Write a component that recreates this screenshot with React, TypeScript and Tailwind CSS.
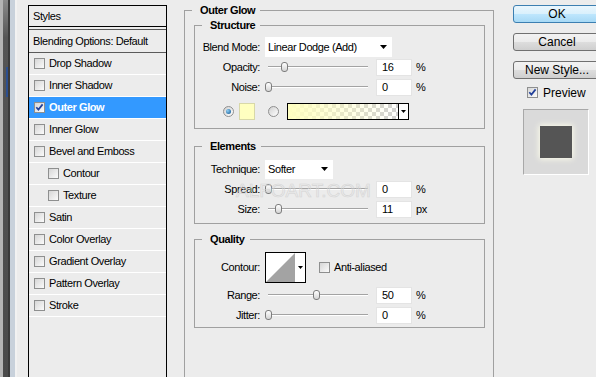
import React from "react";

const Arrow = () => (
  <svg width="7" height="4" viewBox="0 0 7 4" className="shrink-0">
    <path d="M0 0H7L3.5 4Z" fill="#000" />
  </svg>
);

function Check({ checked }: { checked?: boolean }) {
  return (
    <span className="w-[11px] h-[11px] shrink-0 border border-[#8e8f8f] bg-[linear-gradient(135deg,#d6d6d6,#fbfbfb)] flex items-center justify-center">
      {checked && (
        <svg width="9" height="9" viewBox="0 0 9 9">
          <path d="M1.3 4.3L3.4 6.6L7.6 1.4" stroke="#21409a" strokeWidth="1.7" fill="none" />
        </svg>
      )}
    </span>
  );
}

function Radio({ on }: { on?: boolean }) {
  return (
    <span className="w-[11px] h-[11px] rounded-full border border-[#8f8f8f] bg-[linear-gradient(135deg,#d0d0d0,#ffffff)] flex items-center justify-center shrink-0">
      {on && <span className="w-[5px] h-[5px] rounded-full bg-[radial-gradient(circle_at_35%_35%,#8fd0f5,#0a4f8c)]" />}
    </span>
  );
}

function StyleRow({ label, checked, active, indent }: { label: string; checked?: boolean; active?: boolean; indent?: boolean }) {
  return (
    <div
      className={`h-[22px] flex items-center gap-[4px] border-b border-white ${indent ? "pl-[19px]" : "pl-[5px]"} ${
        active ? "bg-[#3399ff] text-white font-bold" : ""
      }`}
    >
      <Check checked={checked} />
      <span>{label}</span>
    </div>
  );
}

function ValueBox({ value }: { value: string }) {
  return <div className="w-[36px] h-[17px] bg-white border border-[#e4e4e4] flex items-center pl-[5px]">{value}</div>;
}

function Slider({ pos }: { pos: number }) {
  return (
    <div className="relative w-[108px] h-[20px] shrink-0 flex items-center px-[4px]">
      <div className="w-full h-[2px] border-t border-[#a3a3a3] border-b border-b-white" />
      <div
        className="absolute top-[5px] w-[7px] h-[10px] rounded-[3px] border border-[#7d7d7d] bg-[linear-gradient(to_bottom,#ffffff,#d4d4d4)]"
        style={{ left: 4 + pos - 3 }}
      />
    </div>
  );
}

function SliderRow({ label, value, pos, unit }: { label: string; value: string; pos: number; unit: string }) {
  return (
    <div className="h-[20px] flex items-center">
      <span className="w-[65px] text-right shrink-0">{label}</span>
      <div className="ml-[4px]">
        <Slider pos={pos} />
      </div>
      <div className="ml-[4px]">
        <ValueBox value={value} />
      </div>
      <span className="ml-[4px]">{unit}</span>
    </div>
  );
}

function Group({ title, className, children }: { title: string; className?: string; children?: React.ReactNode }) {
  return (
    <fieldset className={`border border-[#a0a0a0] ${className ?? ""}`}>
      <legend className="ml-[7px] pl-[8px] pr-[5px] font-bold leading-[14px]">{title}</legend>
      {children}
    </fieldset>
  );
}

function Button({ label, primary }: { label: string; primary?: boolean }) {
  return (
    <div
      className={`h-[18px] w-[88px] rounded-[3px] border flex items-center justify-center text-[12px] tracking-normal ${
        primary
          ? "border-[#3c7fb1] bg-[linear-gradient(to_bottom,#eaf6fd_0%,#d9f0fc_50%,#bee6fd_51%,#a7d9f5_100%)]"
          : "border-[#707070] bg-[linear-gradient(to_bottom,#f2f2f2_0%,#ebebeb_50%,#dddddd_51%,#cfcfcf_100%)]"
      }`}
    >
      {label}
    </div>
  );
}

export default function App() {
  return (
    <div className="relative w-[596px] h-[377px] overflow-hidden bg-[#ececec] flex text-[11px] tracking-[-0.4px] text-black font-['Liberation_Sans',Arial,sans-serif]">
      {/* left edge of another window */}
      <div className="w-[17px] h-full flex shrink-0">
        <div className="w-[3px] h-full bg-[#b4b4b4]" />
        <div className="w-[5px] h-full bg-[linear-gradient(to_bottom,#8a8a8a_0%,#555555_10%,#4a4a4a_100%)] flex flex-col">
          <div className="h-[67px]" />
          <div className="ml-[3px] w-[2px] h-[30px] bg-[#2c4f8f]" />
        </div>
        <div className="w-[2px] h-full bg-[#3a3a3a]" />
        <div className="w-[5px] h-full bg-[#c8d1db]" />
        <div className="w-[2px] h-full bg-[#f2f2f2]" />
      </div>

      {/* styles list */}
      <div className="ml-[11px] mt-[5px] w-[139px] h-[400px] shrink-0 border border-black">
        <div className="h-[21px] border-b border-black flex items-center pl-[4px]">Styles</div>
        <div className="h-[3px] border-b border-[#555555]" />
        <div className="h-[23px] border-b border-[#5a5a5a] flex items-center pl-[4px]">Blending Options: Default</div>
        <StyleRow label="Drop Shadow" />
        <StyleRow label="Inner Shadow" />
        <StyleRow label="Outer Glow" checked active />
        <StyleRow label="Inner Glow" />
        <StyleRow label="Bevel and Emboss" />
        <StyleRow label="Contour" indent />
        <StyleRow label="Texture" indent />
        <StyleRow label="Satin" />
        <StyleRow label="Color Overlay" />
        <StyleRow label="Gradient Overlay" />
        <StyleRow label="Pattern Overlay" />
        <StyleRow label="Stroke" />
      </div>

      {/* main panel */}
      <Group title="Outer Glow" className="ml-[17px] mt-[3px] w-[310px] h-[420px] shrink-0">
        <Group title="Structure" className="ml-[9px] mr-[8px] mt-[1px] pb-[8px]">
          <div className="pt-[5px]">
            <div className="h-[20px] flex items-center">
              <span className="w-[65px] text-right shrink-0">Blend Mode:</span>
              <div className="ml-[5px] w-[127px] h-[20px] bg-white flex items-center justify-between pl-[3px] pr-[5px]">
                <span>Linear Dodge (Add)</span>
                <Arrow />
              </div>
            </div>
            <SliderRow label="Opacity:" value="16" pos={16} unit="%" />
            <SliderRow label="Noise:" value="0" pos={0} unit="%" />
            <div className="mt-[6px] h-[17px] flex items-center">
              <div className="ml-[28px]">
                <Radio on />
              </div>
              <div className="ml-[5px] w-[16px] h-[17px] bg-[#ffffc0] border border-[#d8d8a8]" />
              <div className="ml-[13px]">
                <Radio />
              </div>
              <div className="ml-[8px] w-[122px] h-[17px] border border-black flex">
                <div className="flex-1 bg-[linear-gradient(to_right,#ffffc0,rgba(255,255,192,0)),repeating-conic-gradient(#d0d0d0_0%_25%,#ffffff_0%_50%)] [background-size:100%_100%,8px_8px]" />
                <div className="w-[10px] border-l border-black bg-white flex items-center justify-center">
                  <svg width="5" height="3" viewBox="0 0 5 3">
                    <path d="M0 0H5L2.5 3Z" fill="#000" />
                  </svg>
                </div>
              </div>
            </div>
          </div>
        </Group>

        <Group title="Elements" className="ml-[9px] mr-[8px] mt-[10px] pb-[4px]">
          <div className="pt-[6px]">
            <div className="h-[20px] flex items-center">
              <span className="w-[65px] text-right shrink-0">Technique:</span>
              <div className="ml-[5px] w-[68px] h-[19px] bg-white flex items-center justify-between pl-[3px] pr-[5px]">
                <span>Softer</span>
                <Arrow />
              </div>
            </div>
            <SliderRow label="Spread:" value="0" pos={0} unit="%" />
            <SliderRow label="Size:" value="11" pos={10} unit="px" />
          </div>
        </Group>

        <Group title="Quality" className="ml-[9px] mr-[8px] mt-[8px] pb-[2px]">
          <div className="pt-[6px]">
            <div className="h-[31px] flex items-center">
              <span className="w-[65px] text-right shrink-0">Contour:</span>
              <div className="ml-[5px] w-[41px] h-[31px] border border-black bg-white flex">
                <svg width="29" height="29" viewBox="0 0 29 29" className="shrink-0">
                  <path d="M0 29L29 0V29Z" fill="#a3a3a3" />
                </svg>
                <div className="flex-1 flex items-center justify-center">
                  <svg width="5" height="3" viewBox="0 0 5 3">
                    <path d="M0 0H5L2.5 3Z" fill="#000" />
                  </svg>
                </div>
              </div>
              <div className="ml-[13px]">
                <Check />
              </div>
              <span className="ml-[4px]">Anti-aliased</span>
            </div>
            <div className="mt-[2px]">
              <SliderRow label="Range:" value="50" pos={48} unit="%" />
            </div>
            <SliderRow label="Jitter:" value="0" pos={0} unit="%" />
          </div>
        </Group>
      </Group>

      {/* right column */}
      <div className="ml-[19px] w-[88px] shrink-0 flex flex-col">
        <div className="mt-[5px]">
          <Button label="OK" primary />
        </div>
        <div className="mt-[10px]">
          <Button label="Cancel" />
        </div>
        <div className="mt-[10px]">
          <Button label="New Style..." />
        </div>
        <div className="mt-[8px] h-[11px] flex items-center pl-[14px]">
          <Check checked />
          <span className="ml-[5px] text-[12px] tracking-normal">Preview</span>
        </div>
        <div className="mt-[11px] ml-[10px] w-[66px] h-[66px] border border-t-[#a8a8a8] border-l-[#a8a8a8] border-r-white border-b-white bg-[#dadada] flex items-center justify-center">
          <div className="w-[32px] h-[32px] bg-[#555555] shadow-[0_0_6px_1px_rgba(255,255,235,0.95)]" />
        </div>
      </div>

      {/* watermark */}
      <div className="absolute left-[236px] top-[177px] text-[19px] tracking-[0px] text-transparent [-webkit-text-stroke:0.6px_#d4d4d4] pointer-events-none">
        ALFOART.COM
      </div>
    </div>
  );
}
